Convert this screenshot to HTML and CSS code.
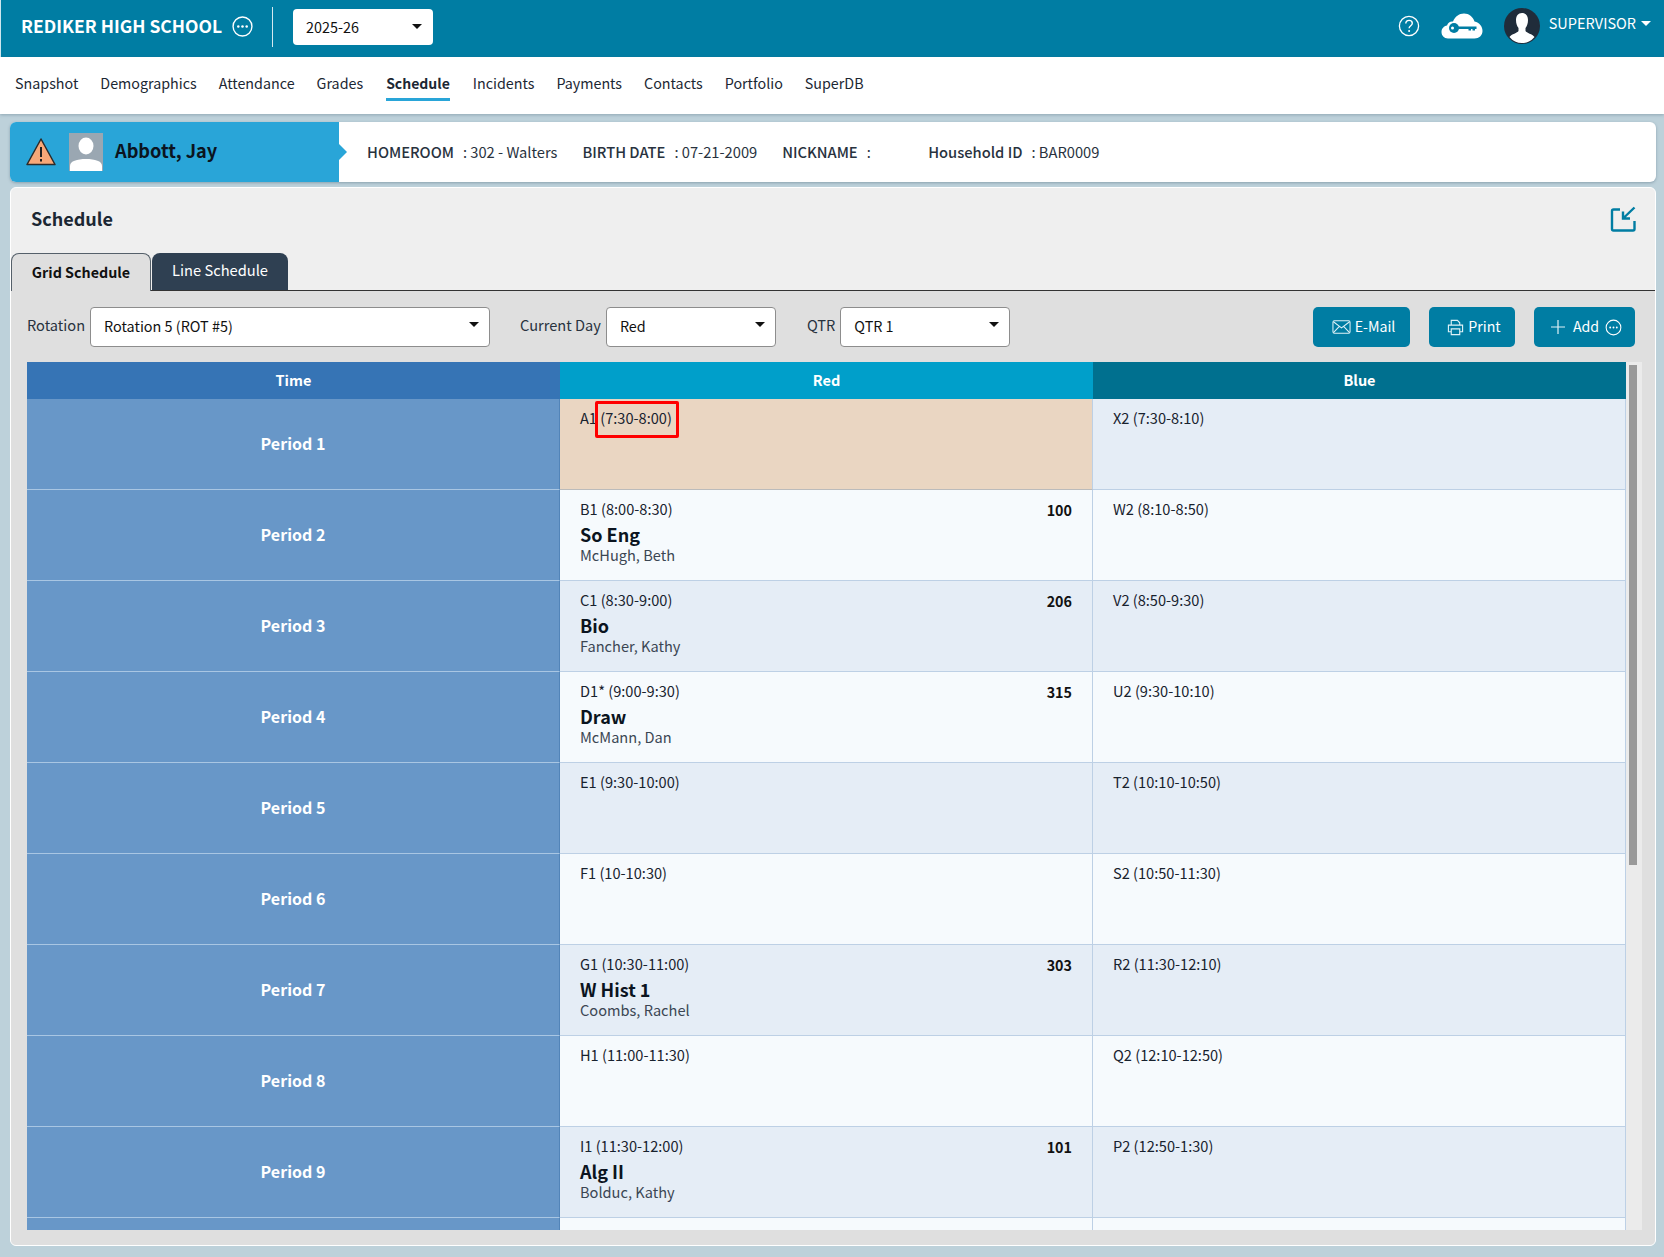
FILE: index.html
```html
<!DOCTYPE html>
<html lang="en">
<head>
<meta charset="utf-8">
<title>Schedule</title>
<link rel="stylesheet" href="styles.css">
</head>
<body>
<header class="topbar">
  <div class="brand">
    <span class="school">REDIKER HIGH SCHOOL</span>
    <svg class="ico-more" viewBox="0 0 20 20"><circle cx="10" cy="10" r="9" fill="none" stroke="#fff" stroke-width="1.3"/><circle cx="6" cy="10" r="1.2" fill="#fff"/><circle cx="10" cy="10" r="1.2" fill="#fff"/><circle cx="14" cy="10" r="1.2" fill="#fff"/></svg>
  </div>
  <div class="year"><span>2025-26</span><i class="caret"></i></div>
  <div class="top-right">
    <svg class="ico-help" viewBox="0 0 22 22"><circle cx="11" cy="11" r="9.6" fill="none" stroke="#fff" stroke-width="1.3"/><path d="M7.8 8.6c0-2 1.5-3.2 3.3-3.2s3.2 1.2 3.2 2.9c0 2.4-3.2 2.5-3.2 5" fill="none" stroke="#fff" stroke-width="1.4"/><circle cx="11.1" cy="16" r="1" fill="#fff"/></svg>
    <svg class="ico-cloud" viewBox="0 0 42 26"><path d="M7 25.500C3 25.500 0.500 22.500 0.500 19C0.500 15.500 3 13 6 12.500C7 9.500 9.500 8 12 8.500C14 3.500 18 0.500 23 0.500C28 0.500 32 4 33.500 8.500C38.500 9.500 41.500 13.500 41.500 18C41.500 22.500 38 25.500 33.500 25.500Z" fill="#fff"/><circle cx="13" cy="15" r="5" fill="#007da3"/><path d="M15 13.500H35.500V16H34V17.500H31.500V16H30V17.500H27.500V16H15Z" fill="#007da3"/><circle cx="11.500" cy="15" r="1.500" fill="#fff"/></svg>
    <svg class="ico-user" viewBox="0 0 36 36"><circle cx="18" cy="18" r="18" fill="#202c3a"/><path d="M18 5c4 0 6 3 6 7 0 3.500-1 6-2.500 8v3c1 2 7 3 9 6a16 16 0 0 1-25 0c2-3 8-4 9-6v-3c-1.500-2-2.500-4.500-2.500-8 0-4 2-7 6-7Z" fill="#fff"/></svg>
    <span class="role">SUPERVISOR</span><i class="caret caret-white"></i>
  </div>
</header>

<nav class="tabsnav">
  <a>Snapshot</a><a>Demographics</a><a>Attendance</a><a>Grades</a><a class="active">Schedule</a><a>Incidents</a><a>Payments</a><a>Contacts</a><a>Portfolio</a><a>SuperDB</a>
</nav>

<main class="page">
  <section class="student">
    <div class="student-id">
      <svg class="ico-warn" viewBox="0 0 32 32"><path d="M16 3 30 28.500H2Z" fill="#f7a878" stroke="#2b2b2b" stroke-width="1.500" stroke-linejoin="round"/><rect x="15" y="11" width="2" height="10" fill="#222"/><rect x="15" y="23" width="2" height="2.500" fill="#222"/></svg>
      <svg class="ico-photo" viewBox="0 0 34 38"><rect width="34" height="38" fill="#9aa7b2"/><ellipse cx="17" cy="13" rx="7.500" ry="8.500" fill="#fff"/><path d="M1 38V33C1 28 8 26 17 26s16 2 16 7V38Z" fill="#fff"/></svg>
      <span class="student-name">Abbott, Jay</span>
    </div>
    <div class="student-info">
      <span class="info"><b>HOMEROOM</b>: 302 - Walters</span>
      <span class="info"><b>BIRTH DATE</b>: 07-21-2009</span>
      <span class="info info-nick"><b>NICKNAME</b>:</span>
      <span class="info"><b>Household ID</b>: BAR0009</span>
    </div>
  </section>

  <section class="card">
    <div class="card-head">
      <h1>Schedule</h1>
      <svg class="ico-export" viewBox="0 0 26 26"><path d="M10 3.500H3.500A1.500 1.500 0 0 0 2 5V23A1.500 1.500 0 0 0 3.500 24.500H23A1.500 1.500 0 0 0 24.500 23V15" fill="none" stroke="#007da3" stroke-width="2.400"/><path d="M24.500 1.500 13 12.500M13 5.500V12.500H20" fill="none" stroke="#007da3" stroke-width="2.400"/></svg>
    </div>
    <div class="tabs">
      <a class="tab tab-on">Grid Schedule</a>
      <a class="tab tab-off">Line Schedule</a>
    </div>
    <div class="panel">
      <div class="toolbar">
        <label class="lbl">Rotation</label>
        <div class="sel sel-rot"><span>Rotation 5 (ROT #5)</span><i class="caret"></i></div>
        <label class="lbl lbl-day">Current Day</label>
        <div class="sel sel-day"><span>Red</span><i class="caret"></i></div>
        <label class="lbl lbl-qtr">QTR</label>
        <div class="sel sel-qtr"><span>QTR 1</span><i class="caret"></i></div>
        <div class="actions">
          <button class="btn btn-mail"><svg viewBox="0 0 20 16"><rect x="1" y="1.500" width="18" height="13" rx="1.500" fill="none" stroke="#dff2f7" stroke-width="1.100"/><path d="M1.500 2.500 10 9l8.500-6.500M1.500 14 7.500 7.500M18.500 14l-6-6.500" fill="none" stroke="#dff2f7" stroke-width="1.100"/></svg><span>E-Mail</span></button>
          <button class="btn btn-print"><svg viewBox="0 0 18 18"><path d="M4.500 6V1.500H11L13.500 4V6M4.500 13.500H1.500V6.500H16.500V13.500H13.500M4.500 10.500H13.500V16.500H4.500Z" fill="none" stroke="#dff2f7" stroke-width="1.200"/></svg><span>Print</span></button>
          <button class="btn btn-add"><svg class="plus" viewBox="0 0 14 14"><path d="M7 0V14M0 7H14" stroke="#dff2f7" stroke-width="1.200"/></svg><span>Add</span><svg class="more" viewBox="0 0 18 18"><circle cx="9" cy="9" r="7.800" fill="none" stroke="#fff" stroke-width="1.100"/><circle cx="5.500" cy="9" r="1" fill="#fff"/><circle cx="9" cy="9" r="1" fill="#fff"/><circle cx="12.500" cy="9" r="1" fill="#fff"/></svg></button>
        </div>
      </div>

      <div class="grid-wrap">
        <div class="grid">
          <div class="gh gh-time">Time</div><div class="gh gh-red">Red</div><div class="gh gh-blue">Blue</div>

          <div class="per">Period 1</div>
          <div class="cell even hl"><div class="line">A1 (7:30-8:00)<span class="redbox"></span></div></div>
          <div class="cell even"><div class="line">X2 (7:30-8:10)</div></div>

          <div class="per">Period 2</div>
          <div class="cell odd"><div class="line">B1 (8:00-8:30)<b class="room">100</b></div><div class="course">So Eng</div><div class="teacher">McHugh, Beth</div></div>
          <div class="cell odd"><div class="line">W2 (8:10-8:50)</div></div>

          <div class="per">Period 3</div>
          <div class="cell even"><div class="line">C1 (8:30-9:00)<b class="room">206</b></div><div class="course">Bio</div><div class="teacher">Fancher, Kathy</div></div>
          <div class="cell even"><div class="line">V2 (8:50-9:30)</div></div>

          <div class="per">Period 4</div>
          <div class="cell odd"><div class="line">D1* (9:00-9:30)<b class="room">315</b></div><div class="course">Draw</div><div class="teacher">McMann, Dan</div></div>
          <div class="cell odd"><div class="line">U2 (9:30-10:10)</div></div>

          <div class="per">Period 5</div>
          <div class="cell even"><div class="line">E1 (9:30-10:00)</div></div>
          <div class="cell even"><div class="line">T2 (10:10-10:50)</div></div>

          <div class="per">Period 6</div>
          <div class="cell odd"><div class="line">F1 (10-10:30)</div></div>
          <div class="cell odd"><div class="line">S2 (10:50-11:30)</div></div>

          <div class="per">Period 7</div>
          <div class="cell even"><div class="line">G1 (10:30-11:00)<b class="room">303</b></div><div class="course">W Hist 1</div><div class="teacher">Coombs, Rachel</div></div>
          <div class="cell even"><div class="line">R2 (11:30-12:10)</div></div>

          <div class="per">Period 8</div>
          <div class="cell odd"><div class="line">H1 (11:00-11:30)</div></div>
          <div class="cell odd"><div class="line">Q2 (12:10-12:50)</div></div>

          <div class="per">Period 9</div>
          <div class="cell even"><div class="line">I1 (11:30-12:00)<b class="room">101</b></div><div class="course">Alg II</div><div class="teacher">Bolduc, Kathy</div></div>
          <div class="cell even"><div class="line">P2 (12:50-1:30)</div></div>

          <div class="per"></div>
          <div class="cell odd"></div>
          <div class="cell odd"></div>
        </div>
        <div class="scrollbar"><div class="thumb"></div></div>
      </div>
    </div>
  </section>
</main>
</body>
</html>
```
FILE: styles.css
```css
* { box-sizing: border-box; }
html, body { margin: 0; padding: 0; }
body {
  width: 1664px;
  height: 1257px;
  overflow: hidden;
  background: #bdd1da;
  font-family: "Noto Sans CJK JP", "Noto Sans", sans-serif;
  font-size: 15px;
  color: #1c2733;
}
.caret {
  display: inline-block;
  width: 0; height: 0;
  border-left: 5px solid transparent;
  border-right: 5px solid transparent;
  border-top: 5px solid #111;
}
.caret-white { border-top-color: #fff; margin-left: 5px; }

.topbar {
  height: 57px;
  background: #007da3;
  display: flex;
  align-items: center;
  border-left: 1px solid #cfe6ee;
  padding-bottom: 4px;
}
.brand {
  display: flex;
  align-items: center;
  gap: 10px;
  height: 40px;
  width: 272px;
  padding-left: 20px;
  border-right: 1px solid #d5e9f0;
}
.school { color: #fff; font-size: 17.500px; font-weight: 700; white-space: nowrap; position: relative; top: -1px; }
.ico-more { width: 21px; height: 21px; }
.year {
  margin-left: 20px;
  width: 140px;
  height: 36px;
  background: #fff;
  border-radius: 4px;
  display: flex;
  align-items: center;
  justify-content: space-between;
  padding: 0 11px 0 13px;
  font-size: 14.400px;
  color: #111;
}
.top-right {
  margin-left: auto;
  display: flex;
  align-items: center;
  padding-right: 13px;
  color: #fff;
  position: relative;
  top: -1px;
}
.ico-help { width: 22px; height: 22px; margin-right: 21px; }
.ico-cloud { width: 42px; height: 26px; margin-right: 21px; }
.ico-user { width: 36px; height: 36px; margin-right: 9px; }
.role { font-size: 14.500px; position: relative; top: -3px; }
.top-right .caret-white { position: relative; top: -2px; }

.tabsnav {
  height: 57px;
  background: #fff;
  display: flex;
  gap: 22px;
  padding-left: 15px;
  align-items: center;
  box-shadow: 0 1px 3px rgba(60, 90, 110, .35);
  position: relative;
}
.tabsnav a {
  font-size: 14.300px;
  color: #1c2733;
  height: 32px;
  line-height: 32px;
  position: relative;
  top: -3px;
}
.tabsnav a.active { font-size: 14px; font-weight: 700; border-bottom: 3px solid #29a5d8; height: 34px; top: -2px; margin-left: 1px; margin-right: 1px; }

.page { padding: 8px 8px 0 10px; }
.student {
  height: 60px;
  background: #fff;
  border-radius: 6px;
  display: flex;
  overflow: hidden;
  box-shadow: 0 1px 3px rgba(60, 90, 110, .4);
}
.student-id {
  width: 329px;
  background: #29a5d8;
  display: flex;
  align-items: center;
  padding-left: 15px;
  position: relative;
}
.student-id::after {
  content: "";
  position: absolute;
  right: -8px;
  top: 22px;
  width: 0; height: 0;
  border-top: 8px solid transparent;
  border-bottom: 8px solid transparent;
  border-left: 8px solid #29a5d8;
}
.ico-warn { width: 32px; height: 32px; }
.ico-photo { width: 34px; height: 38px; margin-left: 12px; }
.student-name { font-size: 18.200px; font-weight: 700; color: #0b1420; margin-left: 12px; position: relative; top: -2px; }
.student-info {
  display: flex;
  align-items: center;
  padding-left: 28px;
  font-size: 14.700px;
  gap: 25px;
  color: #28323e;
  position: relative;
  top: -1px;
}
.info b { font-weight: 500; margin-right: 9px; }
.info-nick { width: 121px; }

.card {
  margin-top: 5px;
  height: 1059px;
  background: #efefef;
  border: 1px solid #fff;
  border-radius: 6px;
  overflow: hidden;
  display: flex;
  flex-direction: column;
}
.card-head {
  height: 65px;
  display: flex;
  justify-content: space-between;
  align-items: center;
  padding: 0 19px 4px 20px;
  flex: none;
}
.card-head h1 { margin: 0; font-size: 18px; font-weight: 600; color: #1c2733; position: relative; top: -1px; }
.ico-export { width: 26px; height: 26px; }
.tabs {
  height: 38px;
  flex: none;
  display: flex;
  gap: 1px;
  padding-left: 0;
  border-bottom: 1px solid #333;
  align-items: flex-end;
}
.tab {
  height: 37px;
  border-radius: 8px 8px 0 0;
  display: flex;
  justify-content: center;
}
.tab-on {
  width: 140px;
  height: 38px;
  margin-bottom: -1px;
  background: #dfdfdf;
  border: 1px solid #55606a;
  border-bottom: none;
  font-weight: 600;
  font-size: 14.300px;
  color: #111;
  padding-top: 7px;
}
.tab-off {
  width: 136px;
  background: #2f4052;
  color: #fff;
  font-size: 14.700px;
  padding-top: 6px;
}
.panel {
  flex: 1;
  background: #dfdfdf;
  padding: 16px 0 0 16px;
  min-height: 0;
  display: flex;
  flex-direction: column;
}
.toolbar {
  display: flex;
  align-items: center;
  height: 40px;
  padding-right: 20px;
  flex: none;
}
.lbl { font-size: 14.600px; color: #28323e; position: relative; top: -3px; }
.lbl-day { margin-left: 30px; }
.lbl-qtr { margin-left: 31px; }
.sel {
  height: 40px;
  background: #fff;
  border: 1px solid #8d8d8d;
  border-radius: 4px;
  display: flex;
  align-items: center;
  justify-content: space-between;
  padding: 0 10px 0 13px;
  margin-left: 5px;
  font-size: 14.400px;
  color: #111;
}
.sel span { position: relative; top: -2px; }
.sel .caret { position: relative; top: -3px; }
.sel-rot { width: 400px; }
.sel-day { width: 170px; }
.sel-qtr { width: 170px; }
.actions { margin-left: auto; display: flex; gap: 19px; }
.btn {
  height: 40px;
  border: none;
  background: #007da3;
  color: #fff;
  font: inherit;
  font-size: 14.200px;
  border-radius: 5px;
  display: flex;
  align-items: center;
  justify-content: center;
  padding: 0 0 0 4px;
}
.btn span { position: relative; top: -1px; }
.btn svg { flex: none; }
.btn-mail { width: 97px; }
.btn-mail svg { width: 19px; height: 16px; margin-right: 4px; }
.btn-print { width: 86px; }
.btn-print svg { width: 17px; height: 17px; margin-right: 4px; }
.btn-add { width: 101px; }
.btn-add .plus { width: 14px; height: 14px; margin-right: 8px; }
.btn-add .more { width: 17px; height: 17px; margin-left: 6px; }

.grid-wrap {
  margin-top: 15px;
  height: 868px;
  display: flex;
  overflow: hidden;
}
.grid {
  width: 1599px;
  flex: none;
  display: grid;
  grid-template-columns: 533px 533px 533px;
  grid-auto-rows: 91px;
  grid-template-rows: 37px;
  overflow: hidden;
}
.gh {
  color: #fff;
  font-weight: 600;
  font-size: 14.500px;
  text-align: center;
  line-height: 35px;
}
.gh-time { background: #3674b5; }
.gh-red { background: #009fca; }
.gh-blue { background: #00708f; }
.per {
  background: #6897c8;
  color: #fff;
  font-weight: 600;
  font-size: 16px;
  display: flex;
  align-items: center;
  justify-content: center;
  border-bottom: 1px solid #a9c6e3;
  border-right: 1px solid #5284b8;
  padding-bottom: 2px;
}
.cell {
  padding: 9px 20px 0 20px;
  border-bottom: 1px solid #bdd0e5;
  border-right: 1px solid #bdd0e5;
  font-size: 14.600px;
  line-height: 20px;
}
.even { background: #e5edf6; }
.odd { background: #f6fafd; }
.cell.hl { background: #ead6c2; border-bottom-color: #bbb; }
.line { display: flex; justify-content: space-between; position: relative; color: #18222e; }
.room { font-weight: 700; font-size: 14.300px; position: relative; top: 1px; color: #111; }
.course { font-size: 18px; font-weight: 600; color: #0b1420; line-height: 25px; margin-top: 3px; }
.teacher { color: #3b4653; line-height: 15px; }
.redbox {
  position: absolute;
  left: 15px;
  top: -7px;
  width: 84px;
  height: 37px;
  border: 3px solid #f00;
  border-radius: 2px;
}
.scrollbar {
  flex: none;
  width: 16px;
  background: #ebebeb;
  padding: 3px 3px 0;
}
.thumb { width: 8px; height: 500px; background: #999; }
```
